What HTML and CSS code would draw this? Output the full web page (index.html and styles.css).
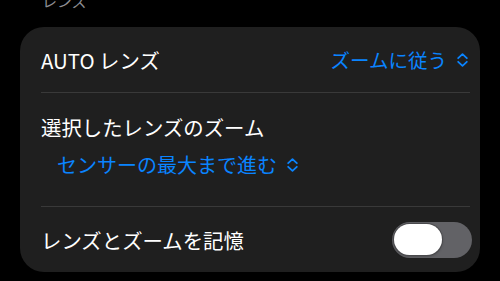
FILE: index.html
```html
<!DOCTYPE html>
<html lang="ja">
<head>
    <meta charset="utf-8">
    <link rel="stylesheet" href="styles.css">
    <title>レンズ</title>
</head>
<body>
    <div class="section-label">レンズ</div>

    <div class="card">
        <div class="row">
            <span class="row-title">AUTO レンズ</span>
            <span class="picker">ズームに従う
                <svg class="chevrons" width="11" height="14" viewBox="0 0 11 14"><path d="M1.2 5.2 L5.5 1.2 L9.8 5.2 M1.2 8.8 L5.5 12.8 L9.8 8.8" /></svg>
            </span>
        </div>
        <div class="sep"></div>
        <div class="row row-tall">
            <span class="row-title">選択したレンズのズーム</span>
            <span class="picker picker-sub">センサーの最大まで進む
                <svg class="chevrons" width="11" height="14" viewBox="0 0 11 14"><path d="M1.2 5.2 L5.5 1.2 L9.8 5.2 M1.2 8.8 L5.5 12.8 L9.8 8.8" /></svg>
            </span>
        </div>
        <div class="sep"></div>
        <div class="row">
            <span class="row-title">レンズとズームを記憶</span>
            <span class="toggle"><span class="knob"></span></span>
        </div>
    </div>
</body>
</html>
```

FILE: styles.css
```css
html, body {
    margin: 0;
    padding: 0;
    background: #000;
}

body {
    font-family: "Noto Sans CJK JP", "Noto Sans", sans-serif;
    color: #fff;
    width: 500px;
    height: 281px;
    overflow: hidden;
}

.section-label {
    height: 36px;
    margin-top: -9px;
    padding-left: 42px;
    font-size: 15px;
    line-height: 20px;
    color: #8d8d92;
}

.card {
    margin: 0 20px;
    height: 245px;
    background: #1f1f1f;
    border-radius: 24px;
    display: flex;
    flex-direction: column;
}

.row {
    height: 65px;
    padding: 0 8px 0 21px;
    display: flex;
    align-items: center;
    justify-content: space-between;
}

.row-tall {
    height: 113px;
    flex-direction: column;
    align-items: flex-start;
    justify-content: flex-start;
    padding-top: 19px;
    box-sizing: border-box;
    gap: 8px;
}

.row-title {
    font-size: 20.4px;
    line-height: 30px;
}

.picker {
    display: flex;
    align-items: center;
    gap: 10px;
    padding-right: 4px;
    font-size: 19.5px;
    line-height: 30px;
    color: #0a84ff;
}

.picker-sub {
    padding-left: 16px;
    font-size: 20px;
}

.chevrons path {
    fill: none;
    stroke: #0a84ff;
    stroke-width: 1.8;
    stroke-linecap: round;
    stroke-linejoin: round;
}

.sep {
    height: 1px;
    margin: 0 10px 0 21px;
    background: #393939;
}

.toggle {
    width: 80px;
    height: 36px;
    border-radius: 18px;
    background: #626266;
    display: flex;
    align-items: center;
    padding-left: 2px;
    box-sizing: border-box;
}

.knob {
    width: 48px;
    height: 31px;
    border-radius: 16px;
    background: #fff;
    box-shadow: 0 0 0 1px #4a4a4d, 0 1px 3px rgba(0, 0, 0, .4);
}
```
